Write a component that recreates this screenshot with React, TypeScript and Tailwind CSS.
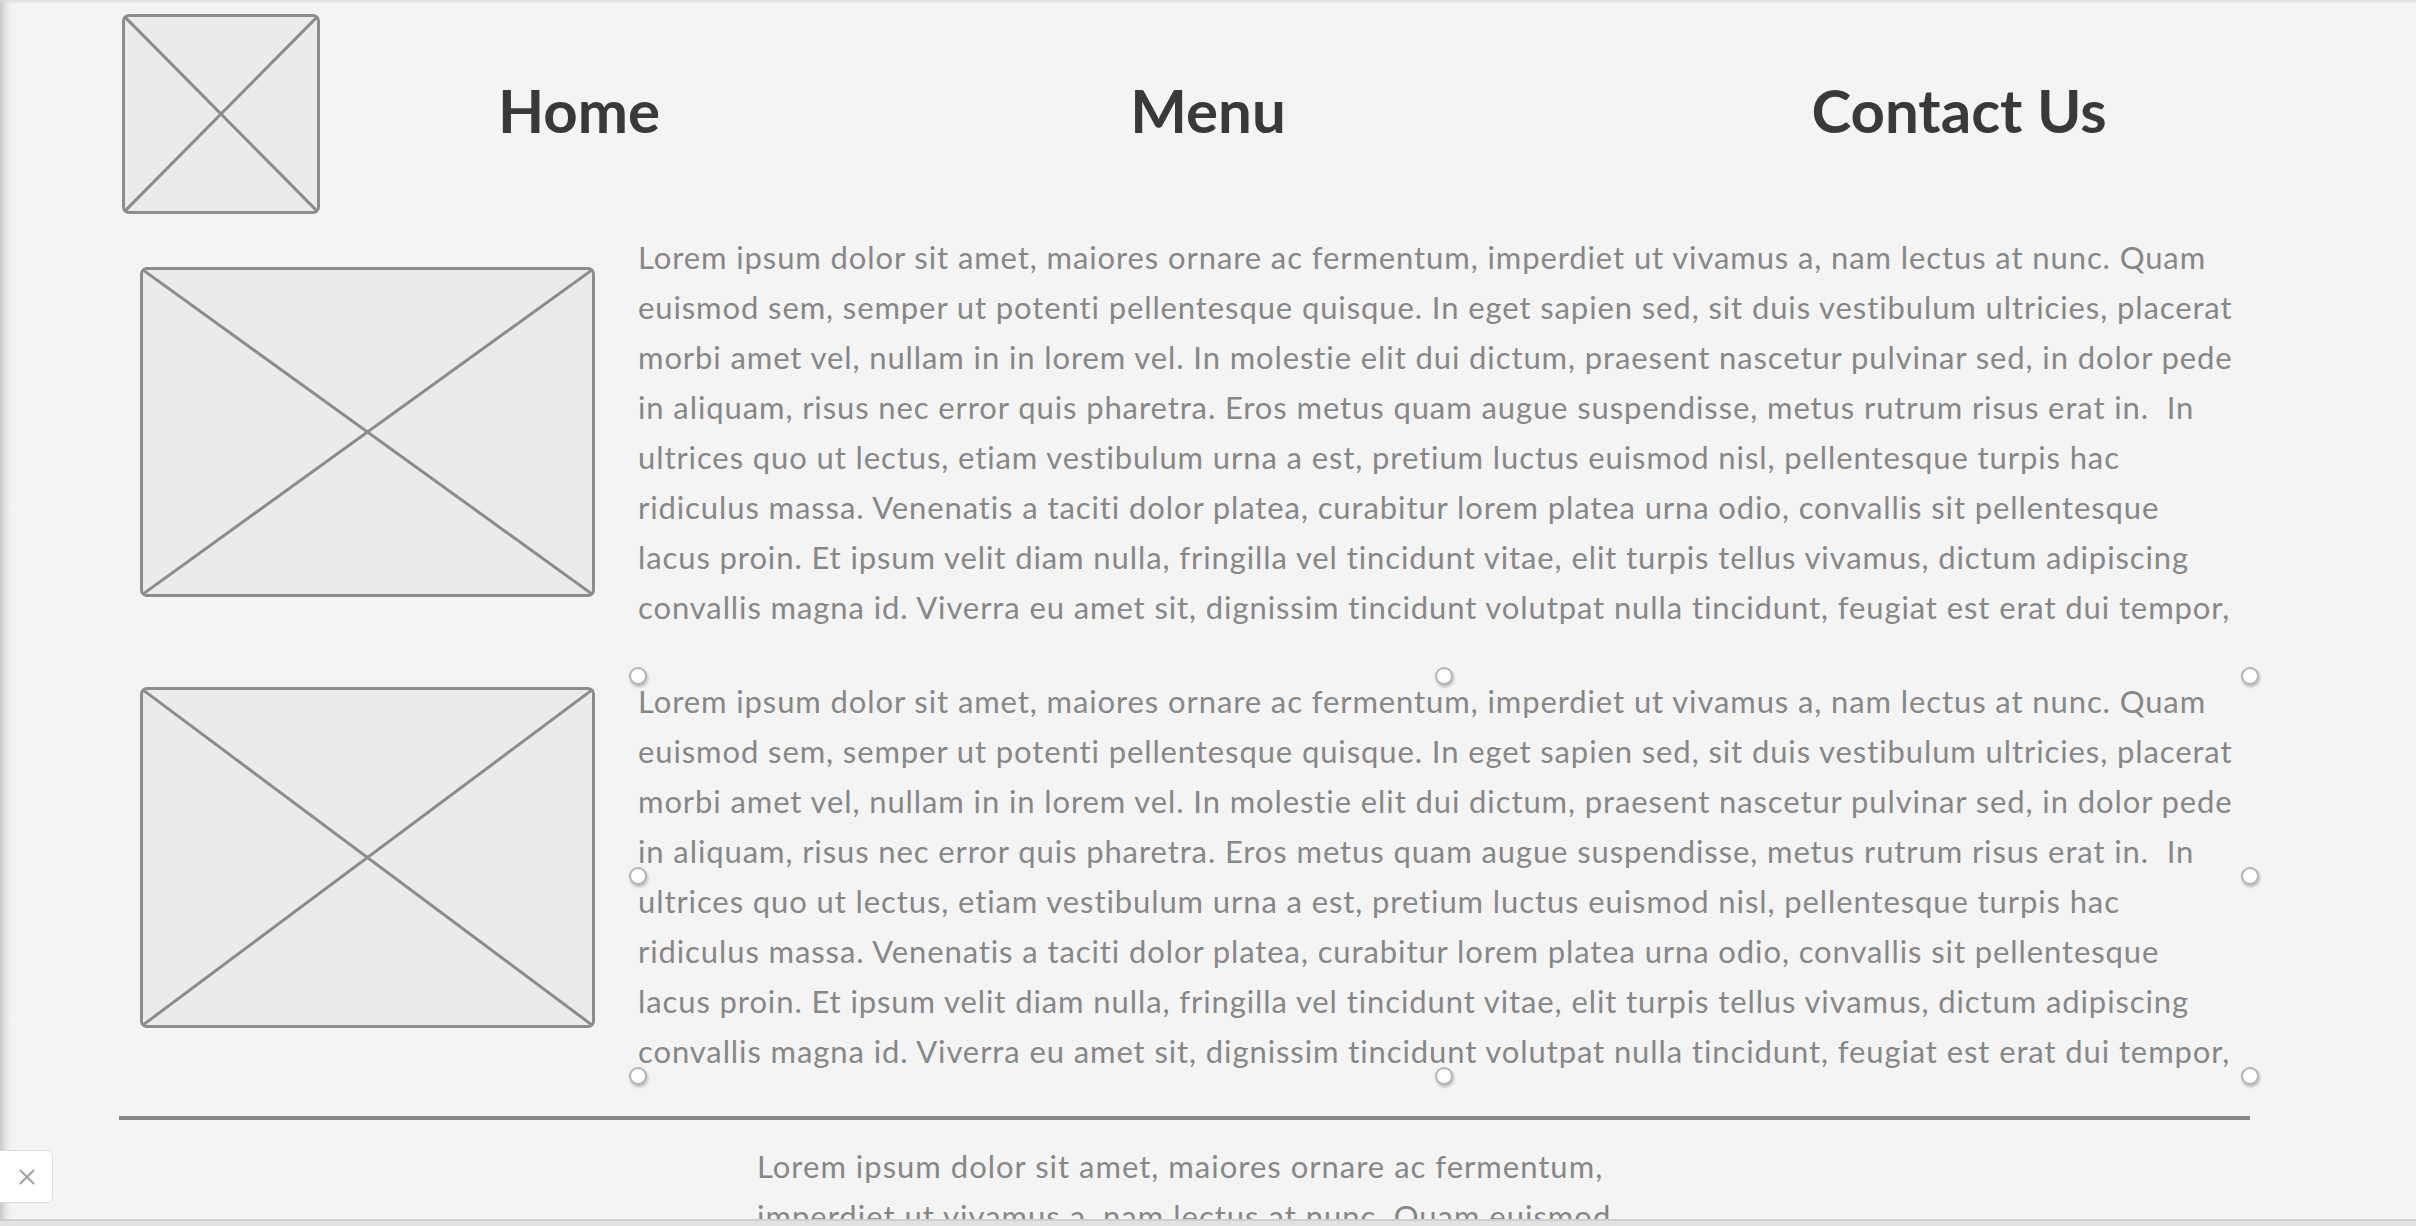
import React from "react";
import { X } from "lucide-react";

const loremLines = [
  "Lorem ipsum dolor sit amet, maiores ornare ac fermentum, imperdiet ut vivamus a, nam lectus at nunc. Quam",
  "euismod sem, semper ut potenti pellentesque quisque. In eget sapien sed, sit duis vestibulum ultricies, placerat",
  "morbi amet vel, nullam in in lorem vel. In molestie elit dui dictum, praesent nascetur pulvinar sed, in dolor pede",
  "in aliquam, risus nec error quis pharetra. Eros metus quam augue suspendisse, metus rutrum risus erat in.\u00a0 In",
  "ultrices quo ut lectus, etiam vestibulum urna a est, pretium luctus euismod nisl, pellentesque turpis hac",
  "ridiculus massa. Venenatis a taciti dolor platea, curabitur lorem platea urna odio, convallis sit pellentesque",
  "lacus proin. Et ipsum velit diam nulla, fringilla vel tincidunt vitae, elit turpis tellus vivamus, dictum adipiscing",
  "convallis magna id. Viverra eu amet sit, dignissim tincidunt volutpat nulla tincidunt, feugiat est erat dui tempor,",
];

const footerLines = [
  "Lorem ipsum dolor sit amet, maiores ornare ac fermentum,",
  "imperdiet ut vivamus a, nam lectus at nunc. Quam euismod",
];

// wireframe image placeholder: grey box with an X through it
const Placeholder: React.FC<{ className: string }> = ({ className }) => (
  <div
    className={`relative shrink-0 rounded-[7px] border-[3px] border-[#8c8c8c] bg-[#ebebeb] ${className}`}
  >
    <svg
      className="absolute inset-0 h-full w-full"
      viewBox="0 0 100 100"
      preserveAspectRatio="none"
    >
      <line x1="0" y1="0" x2="100" y2="100" stroke="#8c8c8c" strokeWidth="3" vectorEffect="non-scaling-stroke" />
      <line x1="100" y1="0" x2="0" y2="100" stroke="#8c8c8c" strokeWidth="3" vectorEffect="non-scaling-stroke" />
    </svg>
  </div>
);

const Handle: React.FC<{ className: string }> = ({ className }) => (
  <span
    className={`absolute h-[18px] w-[18px] -translate-x-1/2 -translate-y-1/2 rounded-full border-2 border-[#b5b5b5] bg-white shadow-[1px_2px_3px_rgba(0,0,0,0.25)] ${className}`}
  />
);

const TextBlock: React.FC<{ selected?: boolean }> = ({ selected }) => (
  <div className="relative w-[1612px] shrink-0 text-[31px] leading-[50px] tracking-[0.9px] text-[#878787]">
    {loremLines.map((line, i) => (
      <div key={i} className="whitespace-nowrap">
        {line}
      </div>
    ))}
    {selected && (
      <>
        <Handle className="left-0 top-0" />
        <Handle className="left-1/2 top-0" />
        <Handle className="left-full top-0" />
        <Handle className="left-0 top-1/2" />
        <Handle className="left-full top-1/2" />
        <Handle className="left-0 top-full" />
        <Handle className="left-1/2 top-full" />
        <Handle className="left-full top-full" />
      </>
    )}
  </div>
);

const App: React.FC = () => {
  return (
    <div
      className="relative h-[1226px] w-full overflow-hidden bg-[#f4f4f4]"
      style={{ fontFamily: "Lato, 'Noto Sans', sans-serif" }}
    >
      {/* window edges */}
      <div className="absolute left-0 top-0 h-full w-[12px] bg-gradient-to-r from-[#c9c9c9] via-[#e6e6e6] to-transparent" />
      <div className="absolute left-0 top-0 h-[4px] w-full bg-gradient-to-b from-[#dedede] to-transparent" />

      {/* header */}
      <header className="flex items-center pl-[122px] pt-[14px]">
        <Placeholder className="h-[200px] w-[198px]" />
        <nav className="flex items-center pb-[9px] text-[60px] font-bold text-[#393939]">
          <a href="#" className="block w-[518px] text-center">
            Home
          </a>
          <a href="#" className="block w-[740px] text-center">
            Menu
          </a>
          <a href="#" className="block w-[762px] text-center">
            Contact Us
          </a>
        </nav>
      </header>

      {/* content rows */}
      <section className="mt-[18px] flex flex-col gap-[44px] pl-[140px]">
        <div className="flex gap-[43px]">
          <Placeholder className="mt-[35px] h-[330px] w-[455px]" />
          <TextBlock />
        </div>
        <div className="flex gap-[43px]">
          <Placeholder className="mt-[11px] h-[341px] w-[455px]" />
          <TextBlock selected />
        </div>
      </section>

      <hr className="ml-[119px] mt-[40px] h-[4px] w-[2131px] border-0 bg-[#888888]" />

      <div className="ml-[757px] mt-[21px] text-[31px] leading-[50px] tracking-[1px] text-[#878787]">
        {footerLines.map((line, i) => (
          <div key={i} className="whitespace-nowrap">
            {line}
          </div>
        ))}
      </div>

      {/* close tab on the left edge */}
      <button className="absolute left-[-6px] top-[1150px] flex h-[53px] w-[59px] items-center justify-center rounded-[6px] border border-[#dcdcdc] bg-white pl-[6px]">
        <X size={26} strokeWidth={1.8} color="#a0a0a0" />
      </button>

      {/* bottom window bar */}
      <div className="absolute bottom-0 left-0 h-[7px] w-full border-t-2 border-[#cfcfcf] bg-[#e2e2e2]" />
    </div>
  );
};

export default App;
